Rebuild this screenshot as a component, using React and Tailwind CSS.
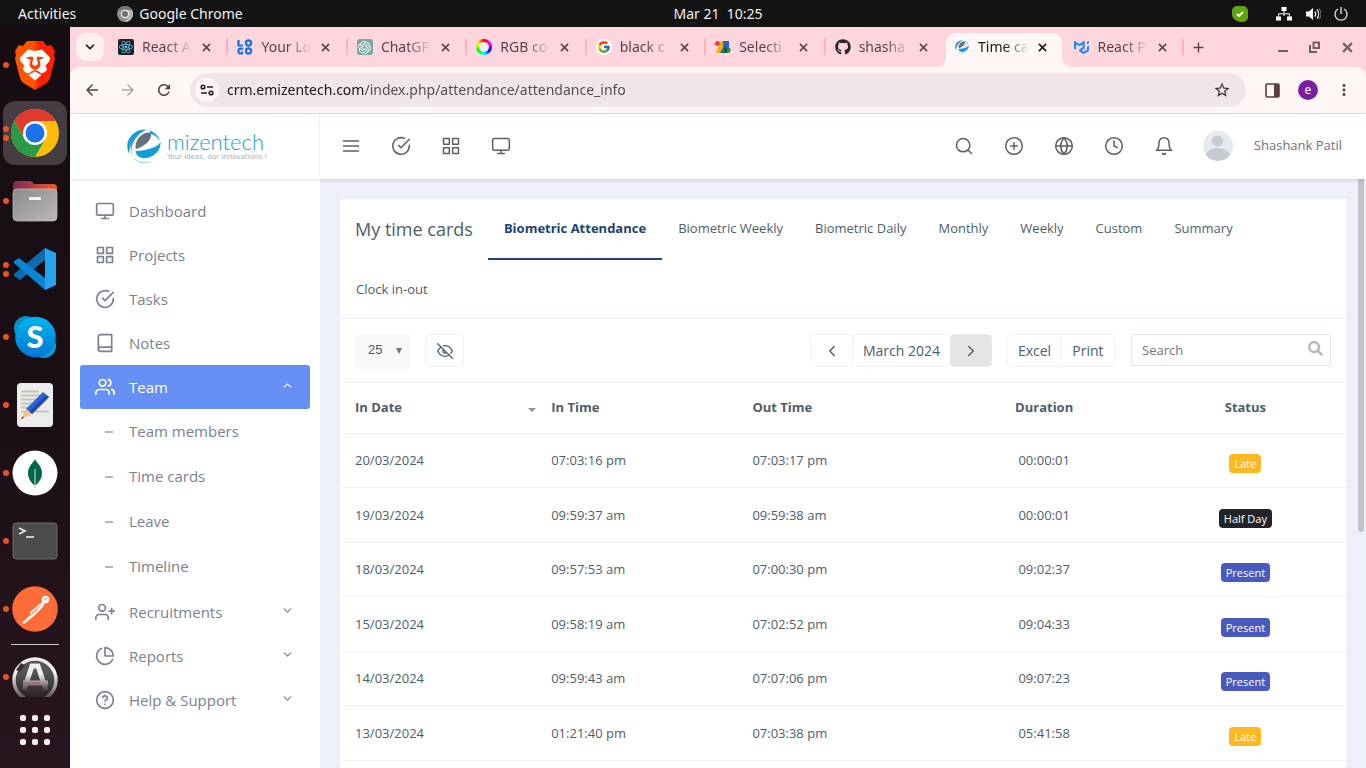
import React from "react";
import {
  FiMenu, FiCheckCircle, FiGrid, FiMonitor, FiSearch, FiPlusCircle, FiGlobe, FiClock, FiBell,
  FiBook, FiUsers, FiUserPlus, FiPieChart, FiHelpCircle, FiChevronUp, FiChevronDown,
  FiChevronLeft, FiChevronRight, FiEyeOff,
} from "react-icons/fi";
import { FaSearch, FaGithub, FaReact } from "react-icons/fa";
import { FcGoogle } from "react-icons/fc";
import { SiMui, SiOpenai } from "react-icons/si";
import { MdAdd, MdArrowBack, MdArrowForward, MdRefresh, MdStarBorder, MdMoreVert } from "react-icons/md";

/* ---------- Brand drawings ---------- */

function EmizenMark({ size }) {
  return (
    <svg width={size} height={size} viewBox="0 0 34 34" aria-hidden="true">
      <path d="M18.500.4C8 .2.300 8 .3 17c0 3.200.8 5.800 2.200 8.300C2 23 2.200 21 3 19c1.500-8 6-14.500 15.500-18.600Z" fill="#149bd9" />
      <path d="M4.500 27C3 15 9 5 20 .5 14 1 5 7.500 4 17c-.4 4-.3 7 .5 10Z" fill="#149bd9" />
      <path d="M21 1c6 1.500 10.500 5.500 12 11.500C31 8.500 27 5.300 22.500 4.500c1.200-.7.800-2.500-1.500-3.500Z" fill="#149bd9" />
      <path d="M8.700 20.300C7.500 11.500 14 4.300 21 3.600c4.500-.3 3.500 5 .5 8.600-3 3.700-7.200 5.900-12.800 8.100Z" fill="#66707c" />
      <path d="M33.400 13C31.500 17.500 22 21.500 8.500 22c.7 6.500 7.500 8.300 13.500 6.500 7-2.200 12.300-8.500 11.400-15.500Z" fill="#149bd9" />
      <path d="M6.500 28.500c4.500 5.500 13 6.500 20 2.300-4 3.200-8 3.200-11 3-4-.5-7-2.300-9-5.300Z" fill="#149bd9" />
    </svg>
  );
}

function BraveIcon() {
  return (
    <svg width="42" height="50" viewBox="0 0 42 50" aria-hidden="true">
      <defs>
        <linearGradient id="brave" x1="0" x2="1"><stop offset=".45" stopColor="#ff5500" /><stop offset=".6" stopColor="#ff2000" /></linearGradient>
      </defs>
      <path d="M13 1h16l4 5 4-1 4 6-1 4 1 4-5 19c-1 3-3 5-5 6l-10 6-10-6c-2-1-4-3-5-6L1 19l1-4-1-4 4-6 4 1Z" fill="url(#brave)" />
      <path d="M14 9.500l7 1.500 7-1.500 8 8c.5 3-1.500 5-4.500 8l1.500 3.500c0 2-3 3.500-5.500 4.500L24 31l-3-1-3 1-3.500 2.500C12 32.500 9 31 9 29l1.500-3.500c-3-3-5-5-4.500-8Z" fill="#fff" />
      <path d="M11.500 17.500l6.500-1 1.500 1-1.500 6.500 3 2.500 3-2.500-1.500-6.500 1.500-1 6.500 1-5 2.500 1 5-1.500 3-4 2-4-2-1.500-3 1-5Z" fill="#ff3b00" />
      <path d="M21 31.500l6.500 3.500-6.500 5.500-6.500-5.500Z" fill="#fff" />
    </svg>
  );
}

function ChromeIcon() {
  return (
    <svg width="48" height="48" viewBox="0 0 48 48" aria-hidden="true">
      <circle cx="24" cy="24" r="24" fill="#fbbc0b" />
      <path d="M3.200 12a24 24 0 0 1 41.600 0H24a12 12 0 0 0-10.400 6l-2 8Z" fill="#de3b2d" />
      <path d="M3.200 12 13.600 30l5 3 15.800-3L24 48A24 24 0 0 1 3.200 12Z" fill="#2a9a48" />
      <circle cx="24" cy="24" r="12" fill="#fff" />
      <circle cx="24" cy="24" r="9.500" fill="#1a73e8" />
    </svg>
  );
}

function FilesIcon() {
  return (
    <svg width="46" height="42" viewBox="0 0 46 42" aria-hidden="true">
      <defs>
        <linearGradient id="files-back" x1="0" x2="1"><stop stopColor="#7d2a58" /><stop offset="1" stopColor="#f05a24" /></linearGradient>
        <linearGradient id="files-front" x1="0" x2="1" y1="0" y2="1"><stop stopColor="#8c8c8c" /><stop offset="1" stopColor="#b9b9b9" /></linearGradient>
      </defs>
      <path d="M1 5a4 4 0 0 1 4-4h13c2 0 3 3 5 3h18a4 4 0 0 1 4 4v12H1Z" fill="url(#files-back)" />
      <rect x="1" y="9" width="44" height="32" rx="4" fill="url(#files-front)" stroke="#c4c4c4" strokeWidth=".7" />
      <rect x="17" y="17" width="12" height="3" rx="1" fill="#f3f3f3" />
    </svg>
  );
}

function CodeIcon() {
  return (
    <svg width="42" height="42" viewBox="0 0 42 42" aria-hidden="true">
      <path d="M31 0v12L6 32 0 28v-2Z" fill="#0b6cb0" />
      <path d="M5 10 31 30v12L0 15v-2Z" fill="#0a86d1" />
      <path d="M31 0l11 5v32l-11 5Z" fill="#25a4f2" />
    </svg>
  );
}

function SkypeIcon() {
  return (
    <svg width="44" height="44" viewBox="0 0 44 44" aria-hidden="true">
      <defs>
        <linearGradient id="skype" x1="0" x2="0" y1="0" y2="1"><stop stopColor="#00b7f0" /><stop offset="1" stopColor="#0078d4" /></linearGradient>
      </defs>
      <circle cx="13" cy="13" r="12" fill="#0e8fc9" />
      <circle cx="31" cy="31" r="12" fill="#0e9bd4" />
      <circle cx="22.500" cy="22" r="20.300" fill="url(#skype)" />
      <text x="22" y="33" textAnchor="middle" fontFamily="Lato, sans-serif" fontWeight="900" fontSize="31" fill="#fff">S</text>
    </svg>
  );
}

function EditorIcon() {
  return (
    <svg width="38" height="46" viewBox="0 0 38 46" aria-hidden="true">
      <rect x="1" y="1" width="36" height="44" rx="4" fill="#ececec" />
      <path d="M5 9.500h18M5 13.500h22M5 17.500h16M5 21.500h14M5 25.500h11M5 29.500h28" stroke="#c6c3b6" strokeWidth="2" />
      <path d="M10 27 27 10l6 5-17 17Z" fill="#2b62d9" />
      <path d="m13 30 17-17 3 2-17 17Z" fill="#1f47ae" />
      <path d="m10 27 6 5-11 5Z" fill="#fdbf84" />
      <path d="m6.500 34.500 1.500 1-3 1.800Z" fill="#333" />
    </svg>
  );
}

function MongoIcon() {
  return (
    <svg width="46" height="46" viewBox="0 0 46 46" aria-hidden="true">
      <circle cx="23" cy="23" r="22.500" fill="#fff" />
      <path d="M23 9c1 3 7 7 7 14 0 6-4 10-6 12h-2c-2-2-6-6-6-12 0-7 6-11 7-14Z" fill="#00684a" />
      <path d="M22.400 19h1.200v19h-1.200Z" fill="#b4cfc4" />
    </svg>
  );
}

function TerminalIcon() {
  return (
    <svg width="46" height="38" viewBox="0 0 46 38" aria-hidden="true">
      <rect x="1" y="1" width="44" height="36" rx="3" fill="#4b4b4b" stroke="#6a6a6a" />
      <path d="m7 6 6 3-6 3" fill="none" stroke="#eee" strokeWidth="1.600" />
      <path d="M14 15h8" stroke="#eee" strokeWidth="1.600" />
    </svg>
  );
}

function PostmanIcon() {
  return (
    <svg width="46" height="46" viewBox="0 0 46 46" aria-hidden="true">
      <circle cx="23" cy="23" r="22.800" fill="#ff6c37" />
      <circle cx="33.500" cy="13.500" r="3.800" fill="#fff" />
      <path d="m30 16-12 10 1 2-9 9 2 1 10-8 8-8 3-5Z" fill="#fff" />
      <path d="m32 14 4-2M20 27l9-8M18 30l8-7" stroke="#ff6c37" strokeWidth=".8" />
    </svg>
  );
}

function UpdaterIcon() {
  return (
    <svg width="46" height="40" viewBox="0 0 46 40" aria-hidden="true">
      <defs>
        <linearGradient id="updater" x1="0" x2="0" y1="0" y2="1"><stop offset=".35" stopColor="#eeeeee" /><stop offset="1" stopColor="#4a3f45" /></linearGradient>
        <linearGradient id="updater-disc" x1="0" x2="0" y1="0" y2="1"><stop offset=".3" stopColor="#555" /><stop offset="1" stopColor="#25191f" /></linearGradient>
      </defs>
      <circle cx="23" cy="23" r="21" fill="url(#updater-disc)" stroke="url(#updater)" strokeWidth="3.500" />
      <path d="M4 13 9 6l4 2-5 7Z" fill="#3b3337" />
      <path d="M12 33 20 9h6l8 24M11 26h25" fill="none" stroke="url(#updater)" strokeWidth="5" />
      <path d="M11 26h17" stroke="#b4503a" strokeWidth="1" />
    </svg>
  );
}

/* ---------- Desktop shell ---------- */

const dockApps = [
  { name: "Brave", icon: <BraveIcon />, dots: 1 },
  { name: "Google Chrome", icon: <ChromeIcon />, dots: 2, active: true },
  { name: "Files", icon: <FilesIcon />, dots: 1 },
  { name: "Code", icon: <CodeIcon />, dots: 2 },
  { name: "Skype", icon: <SkypeIcon />, dots: 1 },
  { name: "Text Editor", icon: <EditorIcon />, dots: 1 },
  { name: "MongoDB Compass", icon: <MongoIcon />, dots: 1 },
  { name: "Terminal", icon: <TerminalIcon />, dots: 1 },
  { name: "Postman", icon: <PostmanIcon />, dots: 1 },
];

function Dots({ count }) {
  return (
    <span className="flex w-[9px] flex-col items-end gap-[3px]">
      {Array.from({ length: count }, (_, i) => (
        <span key={i} className="size-[6px] rounded-full bg-[#e95420]" />
      ))}
    </span>
  );
}

function Dock() {
  return (
    <nav aria-label="Dock" className="flex w-[70px] shrink-0 flex-col overflow-hidden bg-linear-to-b from-[#160d13] via-[#1a0f15] to-[#29151f] pt-1">
      {dockApps.map((app) => (
        <button key={app.name} type="button" aria-label={app.name} className="relative flex h-[68px] w-full shrink-0 items-center">
          <span className={app.active ? "absolute inset-y-[2px] left-[3px] w-[64px] rounded-xl bg-[#463d42]" : "hidden"} />
          <span className="relative flex w-[10px]"><Dots count={app.dots} /></span>
          <span className="relative flex w-[50px] justify-center">{app.icon}</span>
        </button>
      ))}
      <hr className="mx-[11px] mt-px border-[#cfcacc]" />
      <button type="button" aria-label="Software Updater" className="mt-3 flex h-[40px] shrink-0 items-center overflow-hidden">
        <span className="flex w-[10px]"><Dots count={1} /></span>
        <span className="flex w-[50px] justify-center"><UpdaterIcon /></span>
      </button>
      <button type="button" aria-label="Show Applications" className="mx-auto mt-[18px] grid grid-cols-3 gap-[6px]">
        {Array.from({ length: 9 }, (_, i) => (
          <span key={i} className="size-[6px] rounded-[2px] bg-[#f2f0f0]" />
        ))}
      </button>
    </nav>
  );
}

function SystemBar() {
  return (
    <header className="grid h-[27px] shrink-0 grid-cols-3 items-center bg-[#131313] text-sm text-[#f0f0f0]">
      <div className="flex items-center pl-[18px]">
        <button type="button">Activities</button>
        <button type="button" className="ml-[41px] flex items-center gap-[6px]">
          <svg width="16" height="16" viewBox="0 0 16 16" aria-hidden="true">
            <circle cx="8" cy="8" r="8" fill="#8f8f8f" />
            <path d="M1 4a8 8 0 0 1 14 0H8Z" fill="#777" />
            <path d="M8 16a8 8 0 0 0 7-12H9l3 5Z" fill="#b5b5b5" />
            <circle cx="8" cy="8" r="3.600" fill="#6f6f6f" stroke="#eee" strokeWidth="1.200" />
          </svg>
          Google Chrome
        </button>
      </div>
      <button type="button" className="pl-[70px] text-center whitespace-pre">Mar 21  10:25</button>
      <div className="flex items-center justify-end gap-[13px] pr-[18px] text-white">
        <svg className="mr-[15px]" width="16" height="16" viewBox="0 0 16 16" aria-hidden="true">
          <path d="M5 0h6a5 5 0 0 1 5 5v6a5 5 0 0 1-5 5H9C3 15 0 12 0 8V5a5 5 0 0 1 5-5Z" fill="#62a60f" />
          <path d="m5 8 2 2 4-4" fill="none" stroke="#fff" strokeWidth="1.800" />
        </svg>
        <svg width="16" height="14" viewBox="0 0 16 14" aria-hidden="true">
          <path d="M5.500 0h5v4h-5ZM0 9.500h5v4H0ZM11 9.500h5v4h-5Z" fill="#fff" />
          <path d="M8 4v2.500M2.500 10V6.800h11V10M8 6.800V9" stroke="#fff" fill="none" />
        </svg>
        <svg width="16" height="14" viewBox="0 0 16 14" aria-hidden="true">
          <path d="M1 4.500h3L8 1v12L4 9.500H1Z" fill="#fff" />
          <path d="M9.800 4.500a4 4 0 0 1 0 5M12 2.500a7 7 0 0 1 0 9" stroke="#fff" strokeWidth="1.200" fill="none" />
          <path d="M14 1.500a9 9 0 0 1 0 11" stroke="#888" fill="none" />
        </svg>
        <svg width="14" height="14" viewBox="0 0 14 14" aria-hidden="true">
          <path d="M7 0v7M4 2a6 6 0 1 0 6 0" fill="none" stroke="#e8e8e8" strokeWidth="1.300" />
        </svg>
      </div>
    </header>
  );
}

/* ---------- Browser window ---------- */

function LogoTiles() {
  return (
    <svg width="16" height="16" viewBox="0 0 16 16" fill="none" stroke="#1273e6" strokeWidth="2.200" aria-hidden="true">
      <path d="M1.500 1v5.500H6" />
      <circle cx="11.500" cy="4" r="2.600" />
      <path d="M6 9.700H3.500a2 2 0 0 0-2 2v.8a2 2 0 0 0 2 2H5v-2" />
      <circle cx="11.500" cy="12" r="2.600" />
    </svg>
  );
}

function Cross({ size, weight }) {
  return (
    <svg width={size} height={size} viewBox="0 0 10 10" fill="none" stroke="currentColor" strokeWidth={weight} aria-hidden="true">
      <path d="m1 1 8 8M9 1 1 9" />
    </svg>
  );
}

const browserTabs = [
  { title: "React A", icon: <span className="flex size-4 items-center justify-center rounded-[2px] bg-[#20232a] text-[#61dafb]"><FaReact size={14} /></span> },
  { title: "Your Lo", icon: <LogoTiles /> },
  { title: "ChatGP", icon: <span className="flex size-4 items-center justify-center rounded-[3px] bg-[#74aa9c] text-white"><SiOpenai size={13} /></span> },
  { title: "RGB co", icon: <span className="flex size-4 items-center justify-center rounded-full bg-[conic-gradient(#f00,#f0f,#00f,#0ff,#0f0,#ff0,#f00)]"><span className="size-[10px] rounded-full bg-[#ffeef1]" /></span> },
  { title: "black c", icon: <span className="flex size-4 items-center justify-center rounded-full bg-white"><FcGoogle size={14} /></span> },
  {
    title: "Selecti", icon: (
      <svg width="16" height="12" viewBox="0 0 16 12" aria-hidden="true">
        <circle cx="2.500" cy="2.500" r="2.500" fill="#ea4335" />
        <path d="M6 0h4L7 12H1Z" fill="#fbab00" /><path d="M8 0h6v6H8ZM5 12l4-7v7Z" fill="#1a66d6" />
        <circle cx="12.500" cy="9" r="3" fill="#1e8e3e" /><path d="M9 6h3v6H9Z" fill="#155e33" />
      </svg>
    ),
  },
  { title: "shasha", icon: <FaGithub size={16} color="#24292f" /> },
  { title: "Time ca", icon: <EmizenMark size={14} />, active: true },
  { title: "React P", icon: <SiMui size={15} color="#1f8bf5" /> },
];

function TabStrip() {
  return (
    <div className="flex h-10 shrink-0 items-center bg-[#ffd6de] pl-[6px]">
      <button type="button" aria-label="Search tabs" className="flex size-7 shrink-0 items-center justify-center rounded-[10px] bg-[#fff0f1] text-[#2a1418]">
        <FiChevronDown size={14} strokeWidth={3} />
      </button>
      <div role="tablist" className="ml-1 flex h-full min-w-0 flex-1">
        {browserTabs.map((tab, index) => (
          <div
            key={tab.title}
            className={
              tab.active
                ? "relative flex min-w-0 flex-1 items-center pl-[10px] text-[#1f1114]"
                : "relative flex min-w-0 flex-1 items-center pl-[10px] text-[#5f3f46]"
            }
          >
            {tab.active && (
              <span className="absolute inset-x-[2px] top-[6px] bottom-0 rounded-t-[10px] bg-[#fff7f5]">
                <span className="absolute bottom-0 -left-[10px] size-[10px] bg-[radial-gradient(circle_at_top_left,#ffd6de_10px,#fff7f5_10px)]" />
                <span className="absolute -right-[10px] bottom-0 size-[10px] bg-[radial-gradient(circle_at_top_right,#ffd6de_10px,#fff7f5_10px)]" />
              </span>
            )}
            <span className="relative flex w-4 shrink-0 justify-center">{tab.icon}</span>
            <button type="button" role="tab" aria-selected={!!tab.active} className="relative ml-2 w-[51px] shrink-0 mask-r-from-50% text-left text-sm whitespace-nowrap">
              {tab.title}
            </button>
            <button type="button" aria-label={"Close " + tab.title} className="relative ml-[9px]">
              <Cross size={9} weight={1.700} />
            </button>
            {index !== 6 && index !== 7 && <span className="absolute -right-px h-4 w-[2px] bg-[#ffb1c0]" />}
          </div>
        ))}
      </div>
      <div className="flex w-[183px] shrink-0 items-center text-[#5f3f46]">
        <button type="button" aria-label="New tab" className="ml-[7px]"><MdAdd size={17} /></button>
        <div className="ml-auto flex items-center gap-[21px] pr-[13px] text-[#6b6266]">
          <button type="button" aria-label="Minimize" className="h-[10px] w-[10px] border-b-2 border-[#6b6266]" />
          <button type="button" aria-label="Restore">
            <svg width="12" height="12" viewBox="0 0 12 12" fill="none" stroke="currentColor" strokeWidth="2" aria-hidden="true">
              <path d="M4.500 1.500H10v5.500H4.500ZM1 4v7h7" />
            </svg>
          </button>
          <button type="button" aria-label="Close window"><Cross size={11} weight={2} /></button>
        </div>
      </div>
    </div>
  );
}

function Toolbar() {
  return (
    <div className="shrink-0 bg-[#ffd6de]">
      <div className="flex h-[47px] items-center rounded-t-[10px] border-b border-[#ecdcdf] bg-[#fff7f5] pl-[13px] text-[#5b3d43]">
        <div className="flex gap-[18px]">
          <button type="button" aria-label="Back"><MdArrowBack size={18} /></button>
          <button type="button" aria-label="Forward" className="text-[#b3a5a8]"><MdArrowForward size={18} /></button>
          <button type="button" aria-label="Reload"><MdRefresh size={18} /></button>
        </div>
        <div className="ml-[17px] flex h-[34px] min-w-0 flex-1 items-center rounded-full bg-[#f2e5e9] pl-[5px]">
          <button type="button" aria-label="Site information" className="flex size-6 shrink-0 items-center justify-center rounded-full bg-[#fff7f5]">
            <svg width="14" height="12" viewBox="0 0 14 12" fill="none" stroke="#2a1c1f" strokeWidth="1.600" aria-hidden="true">
              <circle cx="3" cy="3" r="1.800" /><path d="M7 3h6M1 9h6" /><circle cx="11" cy="9" r="1.800" />
            </svg>
          </button>
          <input
            aria-label="Address"
            readOnly
            defaultValue="crm.emizentech.com/index.php/attendance/attendance_info"
            className="ml-2 min-w-0 flex-1 bg-[linear-gradient(to_right,#1d1417_138px,#57464b_138px)] bg-clip-text text-sm text-transparent outline-none"
          />
          <button type="button" aria-label="Bookmark" className="mr-[15px] text-[#3f3034]"><MdStarBorder size={18} /></button>
        </div>
        <div className="flex w-[120px] shrink-0 items-center pl-[19px]">
          <button type="button" aria-label="Side panel">
            <svg width="15" height="15" viewBox="0 0 15 15" aria-hidden="true">
              <rect x="1" y="1" width="13" height="13" rx="1" fill="none" stroke="#5b3d43" strokeWidth="1.600" />
              <path d="M9 1h5v13H9Z" fill="#5b3d43" />
            </svg>
          </button>
          <button type="button" aria-label="Profile" className="ml-[18px] flex size-5 items-center justify-center rounded-full bg-[#7b1fa2] text-xs leading-none text-white">e</button>
          <button type="button" aria-label="Menu" className="ml-[17px]"><MdMoreVert size={18} /></button>
        </div>
      </div>
    </div>
  );
}

/* ---------- CRM application ---------- */

const headerLinks = [
  ["Toggle menu", FiMenu], ["Tasks", FiCheckCircle], ["Projects", FiGrid], ["Dashboard", FiMonitor],
];
const headerTools = [
  ["Search", FiSearch], ["Add", FiPlusCircle], ["Language", FiGlobe], ["Clock", FiClock], ["Notifications", FiBell],
];

function IconRow({ items }) {
  return items.map(([label, Icon]) => (
    <button key={label} type="button" aria-label={label} className="flex w-[50px] justify-center">
      <Icon size={20} strokeWidth={1.8} />
    </button>
  ));
}

function AppHeader() {
  return (
    <header className="relative z-10 flex h-[65px] shrink-0 items-center bg-white pb-px text-[#5f5f5f] shadow-[0_1px_4px_rgba(0,0,0,0.12)]">
      <a href="#home" className="flex h-full w-[250px] items-center border-r border-[#f2f2f4] pl-[57px]">
        <EmizenMark size={34} />
        <span className="ml-[6px] flex flex-col">
          <span className="font-[Lato] text-[22px] leading-[22px] font-light text-[#1c9ad6]">mizentech</span>
          <span className="font-['DejaVu_Sans'] text-[7px] leading-[9px] text-[#a5abb0]">Your Ideas, our Innovations !</span>
        </span>
      </a>
      <nav className="ml-[6px] flex"><IconRow items={headerLinks} /></nav>
      <div className="ml-auto flex items-center pr-6">
        <IconRow items={headerTools} />
        <button type="button" className="ml-[14px] flex items-center gap-[21px] text-[13px] text-[#6f7277]">
          <svg width="30" height="30" viewBox="0 0 30 30" aria-hidden="true">
            <defs><clipPath id="avatar"><circle cx="15" cy="15" r="15" /></clipPath></defs>
            <g clipPath="url(#avatar)">
              <path d="M0 0h30v30H0Z" fill="#e6e9ee" />
              <circle cx="14.500" cy="10" r="5.600" fill="#c6cad1" />
              <ellipse cx="15" cy="25.500" rx="12.500" ry="8.500" fill="#c6cad1" />
            </g>
          </svg>
          Shashank Patil
        </button>
      </div>
    </header>
  );
}

const navTop = [["Dashboard", FiMonitor], ["Projects", FiGrid], ["Tasks", FiCheckCircle], ["Notes", FiBook]];
const teamPages = ["Team members", "Time cards", "Leave", "Timeline"];
const navBottom = [["Recruitments", FiUserPlus], ["Reports", FiPieChart], ["Help & Support", FiHelpCircle]];

function SidebarLink({ label, Icon, Chevron, active }) {
  return (
    <a
      href={"#" + label}
      className={
        active
          ? "mx-[10px] flex h-11 items-center rounded-[3px] bg-[#6690f4] px-[15px] text-white"
          : "mx-[10px] flex h-11 items-center rounded-[3px] px-[15px]"
      }
    >
      <span className="mb-px"><Icon size={20} strokeWidth={2} /></span>
      <span className="ml-[14px]">{label}</span>
      {Chevron && <Chevron className="mr-px mb-[4px] ml-auto" size={13} />}
    </a>
  );
}

function Sidebar() {
  return (
    <aside className="w-[250px] shrink-0 overflow-hidden bg-white pt-[10px] text-[15px] text-[#7b8190]">
      {navTop.map(([label, Icon]) => <SidebarLink key={label} label={label} Icon={Icon} />)}
      <SidebarLink label="Team" Icon={FiUsers} Chevron={FiChevronUp} active />
      <div className="pb-px">
        {teamPages.map((label) => (
          <a key={label} href={"#" + label} className="flex h-[45px] items-center pl-[35px]">
            <span className="h-[2px] w-2 bg-[#b3b8c2]" />
            <span className="ml-4">{label}</span>
          </a>
        ))}
      </div>
      {navBottom.map(([label, Icon]) => <SidebarLink key={label} label={label} Icon={Icon} Chevron={FiChevronDown} />)}
    </aside>
  );
}

const cardTabs = ["Biometric Attendance", "Biometric Weekly", "Biometric Daily", "Monthly", "Weekly", "Custom", "Summary", "Clock in-out"];

const records = [
  ["20/03/2024", "07:03:16 pm", "07:03:17 pm", "00:00:01", "Late"],
  ["19/03/2024", "09:59:37 am", "09:59:38 am", "00:00:01", "Half Day"],
  ["18/03/2024", "09:57:53 am", "07:00:30 pm", "09:02:37", "Present"],
  ["15/03/2024", "09:58:19 am", "07:02:52 pm", "09:04:33", "Present"],
  ["14/03/2024", "09:59:43 am", "07:07:06 pm", "09:07:23", "Present"],
  ["13/03/2024", "01:21:40 pm", "07:03:38 pm", "05:41:58", "Late"],
];

const badgeColors = { Late: "bg-[#ffb822]", "Half Day": "bg-[#212529]", Present: "bg-[#485abd]" };

function Controls() {
  return (
    <div className="flex h-[64px] items-start border-b border-[#f0f1f3] px-[15px] pt-[15px] text-sm text-[#4e5e6a]">
      <div className="relative flex">
        <select aria-label="Rows per page" defaultValue="25" className="h-[35px] w-[55px] appearance-none rounded-[2px] bg-[#f6f8f9] pb-[3px] pl-[13px] font-['Liberation_Sans'] text-[13px] text-[#555]">
          <option>10</option>
          <option>25</option>
          <option>50</option>
        </select>
        <svg className="pointer-events-none absolute top-[14px] right-[8px]" width="6" height="6" viewBox="0 0 6 6" aria-hidden="true"><path d="M0 0h6L3 6Z" fill="#777" /></svg>
      </div>
      <button type="button" aria-label="Show or hide columns" className="ml-[15px] flex h-[33px] w-[39px] items-center justify-center rounded-[4px] border border-[#f0f1f3]">
        <FiEyeOff size={16} />
      </button>
      <div className="ml-auto flex h-[33px]">
        <button type="button" aria-label="Previous month" className="flex w-[43px] items-center justify-center rounded-[4px] border border-[#f2f3f4]"><FiChevronLeft size={18} /></button>
        <button type="button" className="-ml-px w-[99px] rounded-[4px] border border-[#f2f3f4]">March 2024</button>
        <button type="button" aria-label="Next month" className="-ml-px flex w-[42px] items-center justify-center rounded-[4px] border border-[#e9eaeb] bg-[#e5e5e5]"><FiChevronRight size={18} /></button>
      </div>
      <div className="ml-[15px] flex h-[33px]">
        <button type="button" className="w-[55px] rounded-l-[4px] border border-[#f2f3f4]">Excel</button>
        <button type="button" className="-ml-px w-[54px] rounded-r-[4px] border border-[#f2f3f4]">Print</button>
      </div>
      <div className="relative ml-4 flex">
        <input type="text" aria-label="Search" placeholder="Search" className="h-8 w-[200px] rounded-[2px] border border-[#dfe2ee] px-[10px] text-[13px] outline-none placeholder:text-[#757575]" />
        <FaSearch className="pointer-events-none absolute top-[7px] right-[8px]" size={15} color="#b0bac0" />
      </div>
    </div>
  );
}

function TimeCards() {
  return (
    <section className="min-w-0 bg-white text-[#4e5e6a]">
      <div className="flex flex-wrap border-b border-[#ebeef8] text-[13px]">
        <h1 className="flex h-[60px] items-center pr-[15px] pl-[15px] text-lg">My time cards</h1>
        {cardTabs.map((tab, index) => (
          <a
            key={tab}
            href={"#" + tab}
            className={
              index === 0
                ? "flex h-[61px] items-center border-b-2 border-[#22426f] px-4 font-bold text-[#22426f]"
                : "flex h-[58px] items-center px-4 pt-px"
            }
          >
            {tab}
          </a>
        ))}
      </div>
      <Controls />
      <table className="w-full table-fixed border-collapse text-[13px]">
        <thead>
          <tr className="h-[50px] border-b border-[#f0f1f3] font-bold">
            <th className="pr-[5px] pl-[15px] text-left">
              <span className="flex items-center justify-between">
                In Date
                <svg className="mt-1" width="8" height="4" viewBox="0 0 8 4" aria-hidden="true"><path d="M0 0h8L4 4Z" fill="#8a93a0" /></svg>
              </span>
            </th>
            <th className="px-[10px] text-left">In Time</th>
            <th className="px-[10px] text-left">Out Time</th>
            <th className="px-[10px] text-center">Duration</th>
            <th className="px-[10px] text-center">Status</th>
          </tr>
        </thead>
        <tbody>
          {records.map(([date, start, end, duration, status]) => (
            <tr key={date} className="border-b border-[#f0f1f3] odd:h-[54px] even:h-[55px]">
              <td className="pt-[2px] pr-[10px] pl-[15px]">{date}</td>
              <td className="px-[10px] pt-[2px]">{start}</td>
              <td className="px-[10px] pt-[2px]">{end}</td>
              <td className="px-[10px] pt-[2px] text-center">{duration}</td>
              <td className="px-[10px] pt-[2px] text-center">
                <span className={"mt-[6px] inline-block rounded-[4px] px-[5px] text-[11px] leading-[19px] text-white " + badgeColors[status]}>{status}</span>
              </td>
            </tr>
          ))}
        </tbody>
      </table>
      <div className="h-[54px]" />
    </section>
  );
}

export default function App() {
  return (
    <div className="flex h-screen flex-col overflow-hidden bg-[#131313] font-['Noto_Sans',sans-serif]">
      <SystemBar />
      <div className="flex min-h-0 flex-1">
        <Dock />
        <div className="flex min-w-0 flex-1 flex-col">
          <TabStrip />
          <Toolbar />
          <div className="flex min-h-0 flex-1 flex-col bg-[#edf0f9] font-['Open_Sans',sans-serif]">
            <AppHeader />
            <div className="flex min-h-0 flex-1">
              <Sidebar />
              <main className="min-w-0 flex-1 overflow-hidden px-5 pt-5"><TimeCards /></main>
              <div className="-ml-2 w-2 shrink-0 pr-[2px]"><div className="h-3/5 rounded-b-full bg-[#c3c4c8]" /></div>
            </div>
          </div>
        </div>
      </div>
    </div>
  );
}
